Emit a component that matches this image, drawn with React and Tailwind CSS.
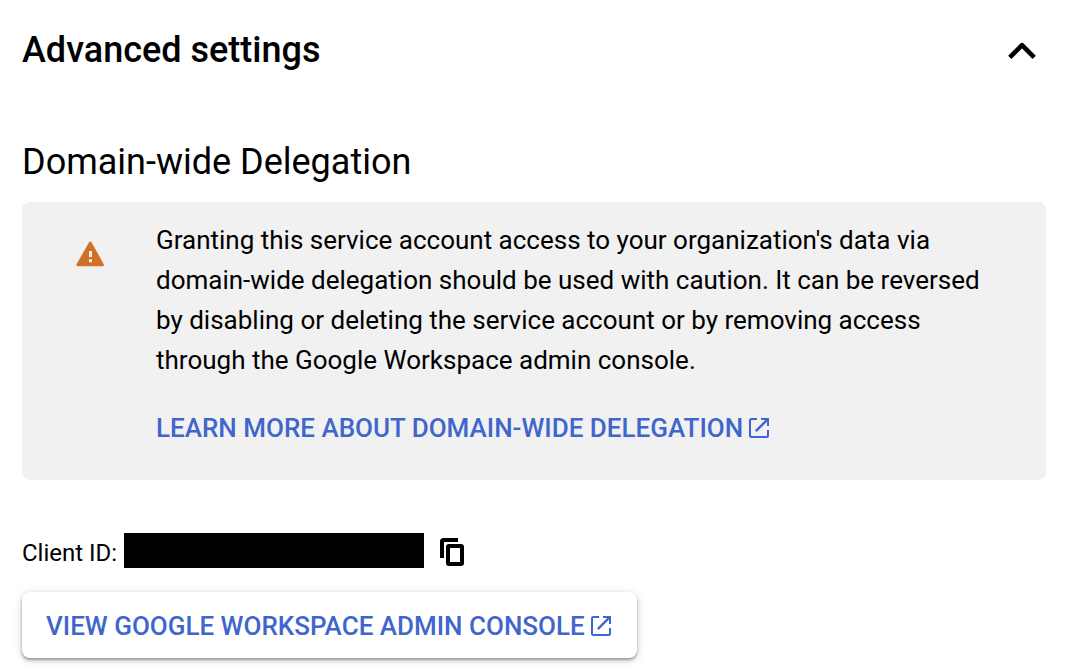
import React from "react";

function ChevronUpIcon() {
  return (
    <svg aria-hidden="true" viewBox="0 0 28 20" className="h-5 w-7" fill="none" stroke="currentColor" strokeWidth="4.6" strokeLinejoin="round">
      <path d="M1.800 17.400 14 5.200l12.200 12.200" />
    </svg>
  );
}

function WarningIcon() {
  return (
    <svg aria-hidden="true" viewBox="0 0 28 26" className="h-[26px] w-7 shrink-0" fill="currentColor">
      <path
        fillRule="evenodd"
        d="M13.2 1Q14.3 -.2 15.4 1L27.900 23.500Q28.300 25.200 26.600 25.300H1.700Q0 25.200.4 23.500ZM13 10v6h3v-6ZM13 18.300v3h3v-3Z"
      />
    </svg>
  );
}

function ExternalIcon() {
  return (
    <svg aria-hidden="true" viewBox="-2 -2 24 24" className="size-6 shrink-0" fill="none" stroke="currentColor" strokeWidth="2">
      <path d="M8 1H2.5Q1 1 1 2.5v15Q1 19 2.5 19h15q1.500 0 1.500-1.500V12M12 1h7v7" />
      <path d="M18.800 1.200 6.800 13.200" strokeWidth="2.4" />
    </svg>
  );
}

function CopyIcon() {
  return (
    <svg aria-hidden="true" viewBox="0 0 24 28" className="h-7 w-6" fill="none" stroke="currentColor" strokeWidth="4">
      <path d="M18 2H3.500Q2 2 2 3.500V20" />
      <rect x="8" y="8" width="14" height="18" rx="1" />
    </svg>
  );
}

export default function App() {
  return (
    <main className="min-h-screen bg-white px-[22px] pt-6 pb-3 font-['Roboto',sans-serif] text-black">
      <section aria-labelledby="advanced-title">
        <header className="flex items-center justify-between pr-[22px]">
          <h1 id="advanced-title" className="text-[36px] leading-[52px] font-medium">Advanced settings</h1>
          <button type="button" aria-label="Collapse advanced settings" aria-expanded="true">
            <ChevronUpIcon />
          </button>
        </header>

        <h2 className="mt-[60px] text-[36px] leading-[52px]">Domain-wide Delegation</h2>

        <div className="mt-[14px] mr-3 flex rounded-lg bg-[#f1f1f1] pt-[18px] pb-8 pl-[54px]">
          <div className="pt-[21px] text-[#d07029]">
            <WarningIcon />
          </div>
          <div className="ml-[52px] pr-14 text-[26px] leading-[40px]">
            <p>
              Granting this service account access to your organization's data via domain-wide
              delegation should be used with caution. It can be reversed by disabling or deleting
              the service account or by removing access through the Google Workspace admin console.
            </p>
            <a href="#learn" className="mt-7 inline-flex items-center gap-1 font-medium text-[#3f66cc]">
              LEARN MORE ABOUT DOMAIN-WIDE DELEGATION
              <ExternalIcon />
            </a>
          </div>
        </div>

        <div className="mt-[53px] flex items-start text-[24px] leading-[40px]">
          <span>Client ID:</span>
          <span className="ml-[7px] h-[35px] w-[300px] bg-black" />
          <button type="button" aria-label="Copy client ID" className="ml-4 pt-[5px]">
            <CopyIcon />
          </button>
        </div>

        <a
          href="#console"
          className="mt-[19px] inline-flex h-[66px] items-center gap-1 rounded-lg px-6 pt-0.5 text-[26px] font-medium text-[#3f66cc] shadow-[0_2px_3px_rgba(0,0,0,0.34),0_2px_10px_rgba(0,0,0,0.16)]"
        >
          VIEW GOOGLE WORKSPACE ADMIN CONSOLE
          <ExternalIcon />
        </a>
      </section>
    </main>
  );
}
